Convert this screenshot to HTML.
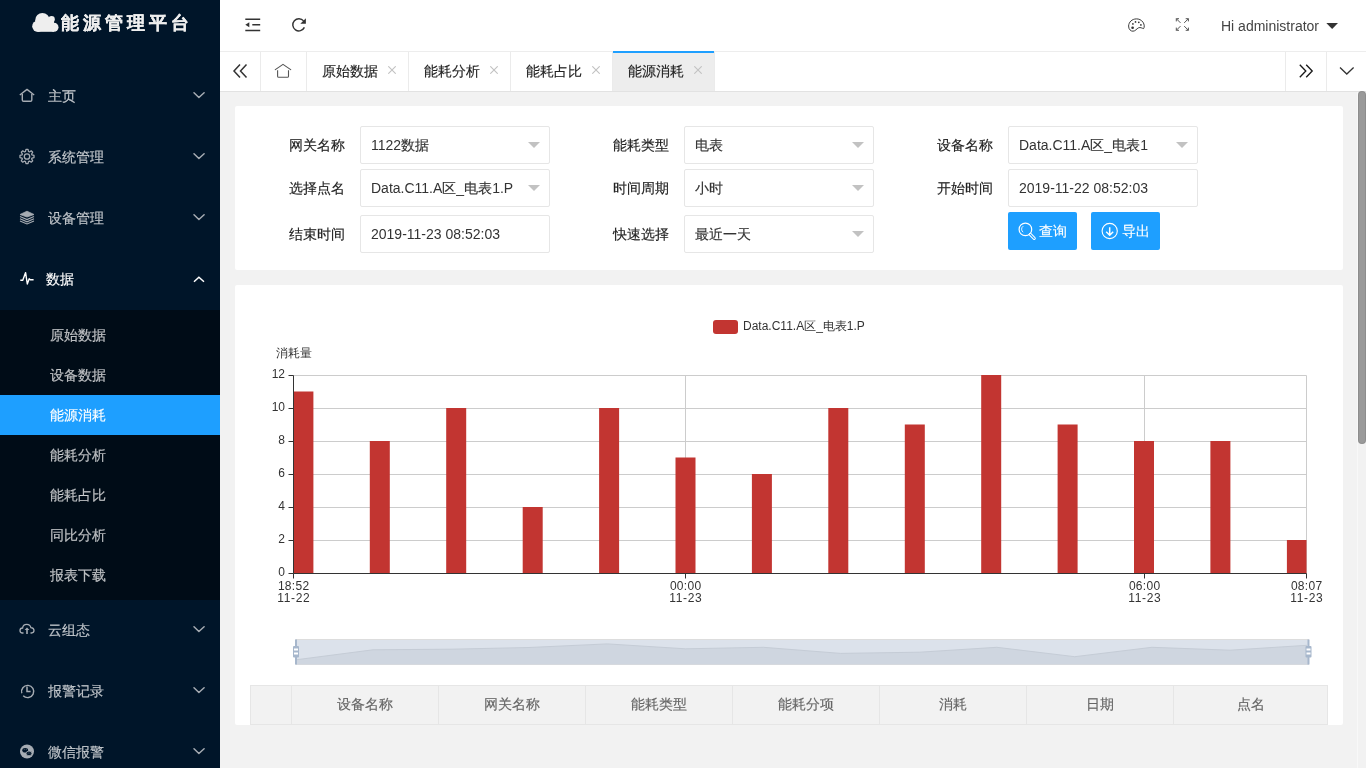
<!DOCTYPE html>
<html><head><meta charset="utf-8">
<style>
*{box-sizing:border-box;margin:0;padding:0}
html,body{width:1366px;height:768px;overflow:hidden;background:#f2f2f2;will-change:transform;-webkit-text-stroke:0.15px currentColor;font-family:"Liberation Sans",sans-serif;font-size:14px;color:#333}
.abs{position:absolute}
.l{-webkit-text-stroke:0}
#side{position:absolute;left:0;top:0;width:220px;height:768px;background:#001529;overflow:hidden}
.logo{position:absolute;left:0;top:0;width:220px;height:51px;color:#eee;font-weight:bold;font-size:18px;letter-spacing:4px}
.mi{position:absolute;left:0;width:220px;height:61px;color:rgba(255,255,255,.7)}
.mi .t{position:absolute;left:48px;top:0;line-height:61px;font-size:14px}
.mi svg.ic{position:absolute;left:19px}
.mi svg.ch{position:absolute;left:193px}
.sub{position:absolute;left:0;top:310px;width:220px;height:290px;background:#000c17}
.si{position:absolute;left:0;width:220px;height:40px;line-height:40px;padding-left:50px;color:rgba(255,255,255,.7)}
.si.on{background:#1e9fff;color:#fff}
#head{position:absolute;left:220px;top:0;width:1146px;height:52px;background:#fff;border-bottom:1px solid #ededed}
#tabs{position:absolute;left:220px;top:52px;width:1146px;height:40px;background:#fff;border-bottom:1px solid #e2e2e2}
.tab{position:absolute;top:0;height:39px;border-right:1px solid #ebebeb;line-height:39px;color:#222}
.tab .x{position:absolute;color:#c2c2c2}
.card{position:absolute;background:#fff;border-radius:2px}
.lbl{position:absolute;width:110px;text-align:right;padding-right:15px;line-height:20px;color:#222}
.inp{position:absolute;width:190px;height:38px;border:1px solid #e6e6e6;border-radius:2px;background:#fff;line-height:36px;padding-left:10px;color:#333}
.edge{position:absolute;right:9px;top:15px;width:0;height:0;border-style:solid;border-width:6px 6px 0 6px;border-color:#c2c2c2 transparent transparent transparent}
.btn{position:absolute;height:38px;width:69px;background:#1e9fff;border-radius:2px;color:#fff}
#sb{position:absolute;left:1357px;top:92px;width:1px;height:676px;background:#f8f8f8}
#sbth{position:absolute;left:1358px;top:91px;width:8px;height:353px;background:#9a9a9a;border-radius:4px;box-shadow:inset 0 0 0 1px rgba(0,0,0,.08)}
.th{position:absolute;top:686px;height:38px;line-height:37px;text-align:center;color:#666;border-left:1px solid #e6e6e6}
</style></head><body>

<div id="side">
  <div class="logo">
    <svg class="abs" style="left:0;top:0" width="70" height="40"><g fill="#eee"><circle cx="37.9" cy="26.2" r="5.7"/><circle cx="42.4" cy="20.2" r="7.2"/><circle cx="51.6" cy="19.2" r="3.2"/><circle cx="54" cy="27.3" r="4.5"/><rect x="37.9" y="21" width="16.1" height="10.8"/></g></svg>
    <div class="abs" style="left:61px;top:9.8px;line-height:26px">能源管理平台</div>
  </div>
  <div class="mi" style="top:66px"><svg class="abs" style="left:0;top:0" width="220" height="61"><path d="M19.8 29 L27 23.4 L34.2 29" fill="none" stroke="#a6acb3" stroke-width="1.4" stroke-linejoin="round"/><path d="M22.3 28 V34 Q22.3 35.3 23.6 35.3 H30.5 Q31.8 35.3 31.8 34 V28" fill="none" stroke="#a6acb3" stroke-width="1.4"/><path d="M194 26.8 L198.9 31.5 L204.1 26.8" fill="none" stroke="#a6acb3" stroke-width="1.5" stroke-linecap="round" stroke-linejoin="round"/></svg><div class="t">主页</div></div>
  <div class="mi" style="top:127px"><svg class="abs" style="left:0;top:0" width="220" height="61"><path d="M25.48 24.53 L25.95 22.48 L28.05 22.48 L28.52 24.53 L29.44 24.91 L31.22 23.79 L32.71 25.28 L31.59 27.06 L31.97 27.98 L34.02 28.45 L34.02 30.55 L31.97 31.02 L31.59 31.94 L32.71 33.72 L31.22 35.21 L29.44 34.09 L28.52 34.47 L28.05 36.52 L25.95 36.52 L25.48 34.47 L24.56 34.09 L22.78 35.21 L21.29 33.72 L22.41 31.94 L22.03 31.02 L19.98 30.55 L19.98 28.45 L22.03 27.98 L22.41 27.06 L21.29 25.28 L22.78 23.79 L24.56 24.91 Z" fill="none" stroke="#a6acb3" stroke-width="1.25" stroke-linejoin="round"/><circle cx="27" cy="29.5" r="2.7" fill="none" stroke="#a6acb3" stroke-width="1.3"/><path d="M194 26.8 L198.9 31.5 L204.1 26.8" fill="none" stroke="#a6acb3" stroke-width="1.5" stroke-linecap="round" stroke-linejoin="round"/></svg><div class="t">系统管理</div></div>
  <div class="mi" style="top:188px"><svg class="abs" style="left:0;top:0" width="220" height="61"><path d="M20 26.5 L27 23.2 L34 26.5 L27 29 Z" fill="#a6acb3" stroke="#a6acb3" stroke-width="0.8" stroke-linejoin="round"/><path d="M20 28.6 L27 31.6 L34 28.6" fill="none" stroke="#a6acb3" stroke-width="1.1"/><path d="M20 30.8 L27 33.8 L34 30.8" fill="none" stroke="#a6acb3" stroke-width="1.1"/><path d="M20 33.0 L27 36.0 L34 33.0" fill="none" stroke="#a6acb3" stroke-width="1.1"/><path d="M194 26.8 L198.9 31.5 L204.1 26.8" fill="none" stroke="#a6acb3" stroke-width="1.5" stroke-linecap="round" stroke-linejoin="round"/></svg><div class="t">设备管理</div></div>
  <div class="mi" style="top:249px;color:#fff"><svg class="abs" style="left:0;top:0" width="220" height="61"><path d="M20.3 31.2 H22.8 L25.6 23.6 L27.3 35 L29.2 29.8 L30.3 30.8 H33.6" fill="none" stroke="#fff" stroke-width="1.4" stroke-linejoin="round"/><path d="M194 32.8 L198.9 28.3 L204 32.8" fill="none" stroke="#fff" stroke-width="1.5"/></svg><div class="t" style="left:46px">数据</div></div>
  <div class="sub">
    <div class="si" style="top:5px">原始数据</div>
    <div class="si" style="top:45px">设备数据</div>
    <div class="si on" style="top:85px">能源消耗</div>
    <div class="si" style="top:125px">能耗分析</div>
    <div class="si" style="top:165px">能耗占比</div>
    <div class="si" style="top:205px">同比分析</div>
    <div class="si" style="top:245px">报表下载</div>
  </div>
  <div class="mi" style="top:600px"><svg class="abs" style="left:0;top:0" width="220" height="61"><path d="M23.5 33 H22.5 C20.8 33 20 31.6 20 30.5 C20 29 21.2 28 22.6 28 C22.8 25.8 24.6 24.3 26.8 24.3 C29 24.3 30.5 25.8 30.9 27.6 C32.8 27.8 34 29.2 34 30.6 C34 32 32.9 33 31.5 33 H30.5" fill="none" stroke="#a6acb3" stroke-width="1.3"/><path d="M27 34 V29.5" stroke="#a6acb3" stroke-width="1.6"/><path d="M24.6 30 L27 27.6 L29.4 30 Z" fill="#a6acb3"/><path d="M194 26.8 L198.9 31.5 L204.1 26.8" fill="none" stroke="#a6acb3" stroke-width="1.5" stroke-linecap="round" stroke-linejoin="round"/></svg><div class="t">云组态</div></div>
  <div class="mi" style="top:661px"><svg class="abs" style="left:0;top:0" width="220" height="61"><path d="M23.2 34.7 A6.1 6.1 0 1 0 21.8 32.3" fill="none" stroke="#a6acb3" stroke-width="1.4"/><path d="M27 25.5 V30.5 H30.6" fill="none" stroke="#a6acb3" stroke-width="1.5"/><path d="M194 26.8 L198.9 31.5 L204.1 26.8" fill="none" stroke="#a6acb3" stroke-width="1.5" stroke-linecap="round" stroke-linejoin="round"/></svg><div class="t">报警记录</div></div>
  <div class="mi" style="top:722px"><svg class="abs" style="left:0;top:0" width="220" height="61"><circle cx="27" cy="29.5" r="7" fill="#a6acb3"/><ellipse cx="25.2" cy="28.2" rx="2.9" ry="2.3" fill="#001529"/><circle cx="24.2" cy="27.6" r="0.45" fill="#a6acb3"/><circle cx="26.2" cy="27.6" r="0.45" fill="#a6acb3"/><ellipse cx="29" cy="31.4" rx="2.9" ry="2.3" fill="#001529" stroke="#a6acb3" stroke-width="0.8"/><circle cx="28.1" cy="31" r="0.45" fill="#a6acb3"/><circle cx="30" cy="31" r="0.45" fill="#a6acb3"/><path d="M194 26.8 L198.9 31.5 L204.1 26.8" fill="none" stroke="#a6acb3" stroke-width="1.5" stroke-linecap="round" stroke-linejoin="round"/></svg><div class="t">微信报警</div></div>
</div>

<div id="head">
  <svg class="abs" style="left:0;top:0" width="1146" height="52">
<path d="M25.3 19.3 H40.2 M32.3 24.8 H40.2 M25.3 30.4 H40.2" stroke="#333" stroke-width="1.5"/>
<path d="M25.3 24.8 L29.3 22.3 V27.3 Z" fill="#333"/>
<path d="M83.6 20.9 A6.1 6.1 0 1 0 84.4 27.4" fill="none" stroke="#333" stroke-width="1.45"/>
<path d="M85.9 18.2 V23.7 H80.3 Z" fill="#333"/>
<path d="M923.6 28.6 C924.6 27.2 924.5 24.5 923.0 22.2 C921.3 19.8 918.8 18.8 916.3 18.9 C912.0 19 908.8 22 908.6 26 C908.5 29.5 911.0 31.3 913.0 31.2 C915.5 31.1 916.5 28.8 918.5 27.8 C920.5 26.9 922.0 28.4 923.6 28.6 Z" fill="none" stroke="#333" stroke-width="0.95"/><circle cx="912.6" cy="27.75" r="1.35" fill="#333"/><circle cx="912.9" cy="23.9" r="0.85" fill="#333"/><circle cx="915.5" cy="21.9" r="0.85" fill="#333"/><circle cx="918.8" cy="22.3" r="0.85" fill="#333"/><circle cx="920.9" cy="24.9" r="0.85" fill="#333"/>
<g stroke="#555" stroke-width="1" fill="none">
<path d="M956.3 18.7 L960.5 22.9 M956.3 18.7 V21.4 M956.3 18.7 H959"/>
<path d="M968.4 18.7 L964.2 22.9 M968.4 18.7 V21.4 M968.4 18.7 H965.7"/>
<path d="M956.3 30.3 L960.5 26.1 M956.3 30.3 V27.6 M956.3 30.3 H959"/>
<path d="M968.4 30.3 L964.2 26.1 M968.4 30.3 V27.6 M968.4 30.3 H965.7"/>
</g>
<path d="M1106.3 23 H1118 L1112.15 29 Z" fill="#333"/>
</svg>
<div class="abs" style="left:1001px;top:0;line-height:52px;color:#444"><span class="l">Hi administrator</span></div>
</div>

<div id="tabs">
  <div class="tab" style="left:0;width:41px"><svg class="abs" style="left:0;top:0" width="41" height="40"><path d="M20 12.5 L14 19 L20 25.5 M26.5 12.5 L20.5 19 L26.5 25.5" fill="none" stroke="#333" stroke-width="1.5"/></svg></div>
  <div class="tab" style="left:41px;width:46px"><svg class="abs" style="left:0;top:0" width="46" height="40"><path d="M14.3 17.6 L22 12.4 L29.7 17.6" fill="none" stroke="#555" stroke-width="1.1" stroke-linejoin="round" stroke-linecap="round"/><path d="M16.6 18.3 V24.2 Q16.6 25.3 17.7 25.3 H26.4 Q27.5 25.3 27.5 24.2 V18.3" fill="none" stroke="#555" stroke-width="1.1"/></svg></div>
  <div class="tab" style="left:87px;width:102px"><span class="abs" style="left:15px">原始数据</span><svg class="abs" style="left:81px;top:14px" width="8" height="8"><path d="M0.3 0.3 L7.7 7.7 M7.7 0.3 L0.3 7.7" stroke="#c2c2c2" stroke-width="1.1"/></svg></div>
  <div class="tab" style="left:189px;width:102px"><span class="abs" style="left:15px">能耗分析</span><svg class="abs" style="left:81px;top:14px" width="8" height="8"><path d="M0.3 0.3 L7.7 7.7 M7.7 0.3 L0.3 7.7" stroke="#c2c2c2" stroke-width="1.1"/></svg></div>
  <div class="tab" style="left:291px;width:102px"><span class="abs" style="left:15px">能耗占比</span><svg class="abs" style="left:81px;top:14px" width="8" height="8"><path d="M0.3 0.3 L7.7 7.7 M7.7 0.3 L0.3 7.7" stroke="#c2c2c2" stroke-width="1.1"/></svg></div>
  <div class="tab" style="left:393px;width:102px;background:#ededed"><div class="abs" style="left:0;top:-1px;width:101px;height:2px;background:#1e9fff"></div><span class="abs" style="left:15px">能源消耗</span><svg class="abs" style="left:81px;top:14px" width="8" height="8"><path d="M0.3 0.3 L7.7 7.7 M7.7 0.3 L0.3 7.7" stroke="#c2c2c2" stroke-width="1.1"/></svg></div>
</div>


<div class="abs" style="left:1285px;top:52px;width:81px;height:39px;background:#fff;border-left:1px solid #ebebeb">
<div class="abs" style="left:40px;top:0;width:1px;height:39px;background:#ebebeb"></div>
<svg class="abs" style="left:0;top:0" width="81" height="40"><path d="M13.8 12.8 L19.8 19 L13.8 25.2 M20.2 12.8 L26.2 19 L20.2 25.2" fill="none" stroke="#1a1a1a" stroke-width="1.35"/><path d="M54 15.5 L60.8 22 L67.6 15.5" fill="none" stroke="#333" stroke-width="1.3"/></svg>
</div>
<div id="sb"></div><div id="sbth"></div>

<!-- form card -->
<div class="card" style="left:235px;top:106px;width:1108px;height:164px"></div>
<div class="lbl" style="left:250px;top:135px">网关名称</div>
<div class="inp" style="left:360px;top:126px"><span class="l">1122</span>数据<i class="edge"></i></div>
<div class="lbl" style="left:574px;top:135px">能耗类型</div>
<div class="inp" style="left:684px;top:126px">电表<i class="edge"></i></div>
<div class="lbl" style="left:898px;top:135px">设备名称</div>
<div class="inp" style="left:1008px;top:126px"><span class="l">Data.C11.A</span>区<span class="l">_</span>电表<span class="l">1</span><i class="edge"></i></div>

<div class="lbl" style="left:250px;top:178px">选择点名</div>
<div class="inp" style="left:360px;top:169px"><span class="l">Data.C11.A</span>区<span class="l">_</span>电表<span class="l">1.P</span><i class="edge"></i></div>
<div class="lbl" style="left:574px;top:178px">时间周期</div>
<div class="inp" style="left:684px;top:169px">小时<i class="edge"></i></div>
<div class="lbl" style="left:898px;top:178px">开始时间</div>
<div class="inp" style="left:1008px;top:169px"><span class="l">2019-11-22 08:52:03</span></div>

<div class="lbl" style="left:250px;top:224px">结束时间</div>
<div class="inp" style="left:360px;top:215px"><span class="l">2019-11-23 08:52:03</span></div>
<div class="lbl" style="left:574px;top:224px">快速选择</div>
<div class="inp" style="left:684px;top:215px">最近一天<i class="edge"></i></div>
<div class="btn" style="left:1008px;top:212px"><svg class="abs" style="left:0;top:0" width="69" height="38"><circle cx="17.4" cy="17.4" r="6.3" fill="none" stroke="#fff" stroke-width="1.2"/><path d="M15.2 14.2 A3.6 3.6 0 0 0 15.2 20.2" fill="none" stroke="#fff" stroke-width="0.9"/><path d="M22.3 22.4 L26.2 26.3" stroke="#fff" stroke-width="3.2" stroke-linecap="round"/><path d="M22.3 22.4 L26.2 26.3" stroke="#1e9fff" stroke-width="1.2" stroke-linecap="round"/></svg><span class="abs" style="left:30.5px;top:0;line-height:38px">查询</span></div>
<div class="btn" style="left:1091px;top:212px"><svg class="abs" style="left:0;top:0" width="69" height="38"><circle cx="18.7" cy="19" r="7.6" fill="none" stroke="#fff" stroke-width="1.1"/><path d="M18.7 15.2 V22.8 M15.2 19.8 L18.7 23.2 L22.2 19.8" fill="none" stroke="#fff" stroke-width="1.5"/></svg><span class="abs" style="left:30.5px;top:0;line-height:38px">导出</span></div>

<!-- chart card -->
<div class="card" style="left:235px;top:285px;width:1108px;height:440px"></div>

<svg class="abs" style="left:0;top:0" width="1366" height="768" viewBox="0 0 1366 768" font-family="Liberation Sans, sans-serif" font-size="12">
<line x1="293.5" y1="375.5" x2="1306.5" y2="375.5" stroke="#ccc" stroke-width="1"/>
<line x1="293.5" y1="408.5" x2="1306.5" y2="408.5" stroke="#ccc" stroke-width="1"/>
<line x1="293.5" y1="441.5" x2="1306.5" y2="441.5" stroke="#ccc" stroke-width="1"/>
<line x1="293.5" y1="474.5" x2="1306.5" y2="474.5" stroke="#ccc" stroke-width="1"/>
<line x1="293.5" y1="507.5" x2="1306.5" y2="507.5" stroke="#ccc" stroke-width="1"/>
<line x1="293.5" y1="540.5" x2="1306.5" y2="540.5" stroke="#ccc" stroke-width="1"/>
<line x1="685.5" y1="375.5" x2="685.5" y2="573.5" stroke="#ccc" stroke-width="1"/>
<line x1="1144.5" y1="375.5" x2="1144.5" y2="573.5" stroke="#ccc" stroke-width="1"/>
<line x1="1306.5" y1="375.5" x2="1306.5" y2="573.5" stroke="#ccc" stroke-width="1"/>
<rect x="293.5" y="391.5" width="19.9" height="182.0" fill="#c23531"/>
<rect x="369.8" y="441.0" width="20.0" height="132.5" fill="#c23531"/>
<rect x="446.2" y="408.0" width="20.0" height="165.5" fill="#c23531"/>
<rect x="522.7" y="507.0" width="20.0" height="66.5" fill="#c23531"/>
<rect x="599.1" y="408.0" width="20.0" height="165.5" fill="#c23531"/>
<rect x="675.5" y="457.5" width="20.0" height="116.0" fill="#c23531"/>
<rect x="751.9" y="474.0" width="20.0" height="99.5" fill="#c23531"/>
<rect x="828.3" y="408.0" width="20.0" height="165.5" fill="#c23531"/>
<rect x="904.8" y="424.5" width="20.0" height="149.0" fill="#c23531"/>
<rect x="981.2" y="375.0" width="20.0" height="198.5" fill="#c23531"/>
<rect x="1057.6" y="424.5" width="20.0" height="149.0" fill="#c23531"/>
<rect x="1134.0" y="441.0" width="20.0" height="132.5" fill="#c23531"/>
<rect x="1210.4" y="441.0" width="20.0" height="132.5" fill="#c23531"/>
<rect x="1286.9" y="540.0" width="19.6" height="33.5" fill="#c23531"/>
<line x1="293.5" y1="375.5" x2="293.5" y2="573.5" stroke="#333" stroke-width="1"/>
<line x1="293.5" y1="573.5" x2="1306.5" y2="573.5" stroke="#333" stroke-width="1"/>
<line x1="288.5" y1="573.5" x2="293.5" y2="573.5" stroke="#333" stroke-width="1"/>
<text x="285.0" y="576.3" text-anchor="end" fill="#333">0</text>
<line x1="288.5" y1="540.5" x2="293.5" y2="540.5" stroke="#333" stroke-width="1"/>
<text x="285.0" y="543.3" text-anchor="end" fill="#333">2</text>
<line x1="288.5" y1="507.5" x2="293.5" y2="507.5" stroke="#333" stroke-width="1"/>
<text x="285.0" y="510.3" text-anchor="end" fill="#333">4</text>
<line x1="288.5" y1="474.5" x2="293.5" y2="474.5" stroke="#333" stroke-width="1"/>
<text x="285.0" y="477.3" text-anchor="end" fill="#333">6</text>
<line x1="288.5" y1="441.5" x2="293.5" y2="441.5" stroke="#333" stroke-width="1"/>
<text x="285.0" y="444.3" text-anchor="end" fill="#333">8</text>
<line x1="288.5" y1="408.5" x2="293.5" y2="408.5" stroke="#333" stroke-width="1"/>
<text x="285.0" y="411.3" text-anchor="end" fill="#333">10</text>
<line x1="288.5" y1="375.5" x2="293.5" y2="375.5" stroke="#333" stroke-width="1"/>
<text x="285.0" y="378.3" text-anchor="end" fill="#333">12</text>
<line x1="293.5" y1="573.5" x2="293.5" y2="578.5" stroke="#333" stroke-width="1"/>
<text x="293.65" y="590" text-anchor="middle" fill="#333" letter-spacing="0.3">18:52</text>
<text x="293.8" y="602" text-anchor="middle" fill="#333" letter-spacing="0.65">11-22</text>
<line x1="685.5" y1="573.5" x2="685.5" y2="578.5" stroke="#333" stroke-width="1"/>
<text x="685.65" y="590" text-anchor="middle" fill="#333" letter-spacing="0.3">00:00</text>
<text x="685.8" y="602" text-anchor="middle" fill="#333" letter-spacing="0.65">11-23</text>
<line x1="1144.5" y1="573.5" x2="1144.5" y2="578.5" stroke="#333" stroke-width="1"/>
<text x="1144.65" y="590" text-anchor="middle" fill="#333" letter-spacing="0.3">06:00</text>
<text x="1144.8" y="602" text-anchor="middle" fill="#333" letter-spacing="0.65">11-23</text>
<line x1="1306.5" y1="573.5" x2="1306.5" y2="578.5" stroke="#333" stroke-width="1"/>
<text x="1306.65" y="590" text-anchor="middle" fill="#333" letter-spacing="0.3">08:07</text>
<text x="1306.8" y="602" text-anchor="middle" fill="#333" letter-spacing="0.65">11-23</text>
<text x="293.5" y="357" text-anchor="middle" fill="#333">消耗量</text>
<rect x="713" y="320" width="25" height="14" rx="3" fill="#c23531"/>
<text x="743" y="330.3" fill="#333">Data.C11.A区_电表1.P</text>
<rect x="296" y="639.5" width="1012.5" height="25.0" fill="#dce2eb" stroke="#ddd" stroke-width="1"/>
<polygon points="296,664.5 296.9,659.7 373.0,649.8 451.0,649.2 529.0,647.5 607.3,643.9 685.4,648.8 763.4,647.3 840.6,653.4 919.7,652.2 996.8,647.3 1074.8,656.7 1151.9,647.3 1230.0,650.2 1307.0,645.3 1308.5,664.5" fill="#cfd6e0"/>
<polyline points="296.9,659.7 373.0,649.8 451.0,649.2 529.0,647.5 607.3,643.9 685.4,648.8 763.4,647.3 840.6,653.4 919.7,652.2 996.8,647.3 1074.8,656.7 1151.9,647.3 1230.0,650.2 1307.0,645.3" fill="none" stroke="#c5ccd6" stroke-width="1"/>
<line x1="296" y1="639.5" x2="296" y2="664.5" stroke="#a7b7cc" stroke-width="2"/>
<rect x="293" y="646" width="6" height="11.5" rx="1" fill="#a7b7cc"/>
<rect x="294" y="648.5" width="4" height="2" fill="#fff"/>
<rect x="294" y="652.5" width="4" height="2" fill="#fff"/>
<line x1="1308.5" y1="639.5" x2="1308.5" y2="664.5" stroke="#a7b7cc" stroke-width="2"/>
<rect x="1305.5" y="646" width="6" height="11.5" rx="1" fill="#a7b7cc"/>
<rect x="1306.5" y="648.5" width="4" height="2" fill="#fff"/>
<rect x="1306.5" y="652.5" width="4" height="2" fill="#fff"/>
</svg>
<!-- table header -->
<div class="abs" style="left:250px;top:685px;width:1078px;height:40px;background:#f2f2f2;border:1px solid #e6e6e6"></div>
<div class="th" style="left:291px;width:147px">设备名称</div>
<div class="th" style="left:438px;width:147px">网关名称</div>
<div class="th" style="left:585px;width:147px">能耗类型</div>
<div class="th" style="left:732px;width:147px">能耗分项</div>
<div class="th" style="left:879px;width:147px">消耗</div>
<div class="th" style="left:1026px;width:147px">日期</div>
<div class="th" style="left:1173px;width:155px">点名</div>


</body></html>
